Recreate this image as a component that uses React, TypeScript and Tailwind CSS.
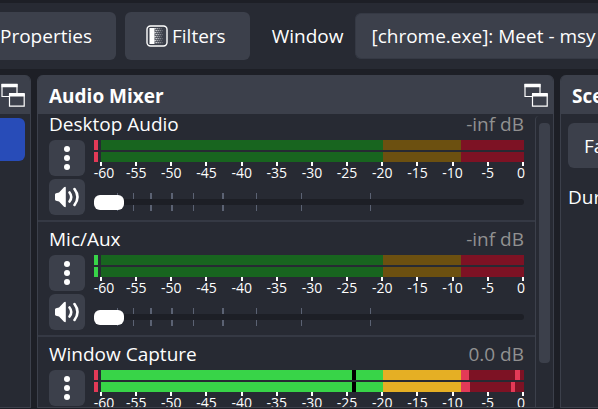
type Span = { from: number; to: number; tone: string };
type Channel = { name: string; level: string; clip: string; live: boolean; rows: Span[][] };

const scale = [-60, -55, -50, -45, -40, -35, -30, -25, -20, -15, -10, -5, 0];
const faderMarks = [23, 39, 56, 77, 99, 128, 162, 207, 276];
const wideMarks = [56, 77, 128];

const channels: Channel[] = [
  { name: "Desktop Audio", level: "-inf dB", clip: "bg-[#e33a57]", live: false, rows: [[], []] },
  { name: "Mic/Aux", level: "-inf dB", clip: "bg-[#38d448]", live: false, rows: [[], []] },
  {
    name: "Window Capture",
    level: "0.0 dB",
    clip: "bg-[#e33a57]",
    live: true,
    rows: [
      [
        { from: 251, to: 255, tone: "bg-black" },
        { from: 360, to: 368, tone: "bg-[#e33a57]" },
        { from: 414, to: 419, tone: "bg-[#e33a57]" },
      ],
      [
        { from: 251, to: 255, tone: "bg-black" },
        { from: 360, to: 369, tone: "bg-[#e33a57]" },
        { from: 410, to: 414, tone: "bg-[#e33a57]" },
      ],
    ],
  },
];

function PopOutIcon() {
  return (
    <svg width="24" height="24" viewBox="0 0 24 24" fill="none" stroke="#fff" aria-hidden="true">
      <path d="M8 13.5H1V1.5H16V10" strokeWidth="1.2" />
      <path d="M.5 2.5H16.5" strokeWidth="3.4" />
      <path d="M8.5 11V23.2H23.2V11" strokeWidth="1.2" />
      <path d="M8 11.8H23.8" strokeWidth="3.6" />
    </svg>
  );
}

function FilterIcon() {
  const dots = [];
  for (let row = 0; row < 8; row++) {
    for (let col = 0; col < 4; col++) {
      dots.push(
        <rect
          key={`${row}-${col}`}
          x={8.5 + col * 2 + (row % 2)}
          y={3 + row * 2}
          width={1.3}
          height={1.3}
          opacity={0.9 - col * 0.22}
        />,
      );
    }
  }
  return (
    <svg width="22" height="22" viewBox="0 0 22 22" fill="#fff" aria-hidden="true">
      <rect x="1" y="1" width="20" height="20" rx="3.5" fill="none" stroke="#fff" strokeWidth="1.4" />
      <rect x="3.5" y="3" width="5" height="16" />
      {dots}
    </svg>
  );
}

function DotsIcon() {
  return (
    <svg width="6" height="24" viewBox="0 0 6 24" fill="#fff" aria-hidden="true">
      <circle cx="3" cy="3" r="3" />
      <circle cx="3" cy="12" r="3" />
      <circle cx="3" cy="21" r="3" />
    </svg>
  );
}

function SpeakerIcon() {
  return (
    <svg width="26" height="22" viewBox="0 0 26 22" fill="none" stroke="#fff" aria-hidden="true">
      <path d="M1 8.5Q1 7.5 2 7.3L5 6.5L10 1.2Q11.8 0 11.8 1.8V20.2Q11.8 22 10 20.8L5 15.5L2 14.7Q1 14.5 1 13.5Z" fill="#fff" stroke="none" />
      <path d="M15.5 6.5Q19 11 15.5 15.5" strokeWidth="2.6" strokeLinecap="round" />
      <path d="M20.5 3Q26.5 11 20.5 19" strokeWidth="2.6" strokeLinecap="round" />
    </svg>
  );
}

function MeterRow({ channel, row }: { channel: Channel; row: Span[] }) {
  const { live, clip } = channel;
  return (
    <div className="flex h-2.5 gap-[3px]">
      <div className={`w-1 ${clip}`} />
      <div className="relative flex flex-1">
        <div className={`grow-[282] ${live ? "bg-[#38d448]" : "bg-[#18651f]"}`} />
        <div className={`grow-[78] ${live ? "bg-[#e5af24]" : "bg-[#6c5010]"}`} />
        <div className="grow-[63] bg-[#7d1224]" />
        {row.map((s) => (
          <div
            key={s.from}
            className={`absolute inset-y-0 ${s.tone}`}
            style={{ left: `${(s.from / 423) * 100}%`, width: `${((s.to - s.from) / 423) * 100}%` }}
          />
        ))}
      </div>
    </div>
  );
}

function ChannelStrip({ channel }: { channel: Channel }) {
  return (
    <section className="border-b-2 border-[#353944] px-[11px] pt-[7px] pb-[5px]">
      <div className="mb-1.5 flex justify-between leading-5">
        <h3>{channel.name}</h3>
        <span className="text-[#919191]">{channel.level}</span>
      </div>
      <div className="flex gap-[9px]">
        <div className="flex flex-col gap-[3px]">
          <button aria-label={`${channel.name} options`} className="flex size-9 items-center justify-center rounded-md bg-[#3c404b]">
            <DotsIcon />
          </button>
          <button aria-label={`Mute ${channel.name}`} className="flex size-9 items-center justify-center rounded-md bg-[#3c404b]">
            <SpeakerIcon />
          </button>
        </div>
        <div className="min-w-0 flex-1">
          <div className="flex flex-col gap-0.5">
            {channel.rows.map((row, i) => (
              <MeterRow key={i} channel={channel} row={row} />
            ))}
          </div>
          <div className="flex justify-between pr-px pl-[7px] text-sm leading-[13px]">
            {scale.map((n) => (
              <div key={n} className="group flex w-0 flex-col items-center">
                <div className="h-1 w-0.5 bg-white" />
                <span className="group-first:pl-1.5 group-last:pr-1">{n}</span>
              </div>
            ))}
          </div>
          <div className="relative mt-3.5 h-[18px]">
            {faderMarks.map((m) => (
              <div
                key={m}
                className={`absolute inset-y-0 bg-[#5b6273] ${wideMarks.includes(m) ? "w-0.5" : "w-px"}`}
                style={{ left: `${(m / 430) * 100}%` }}
              />
            ))}
            <input
              type="range"
              min={0}
              max={100}
              defaultValue={0}
              aria-label={`${channel.name} volume`}
              className="relative block h-[18px] w-full appearance-none bg-transparent [&::-webkit-slider-runnable-track]:h-1.5 [&::-webkit-slider-runnable-track]:rounded-full [&::-webkit-slider-runnable-track]:bg-[#1d1f26] [&::-webkit-slider-thumb]:-mt-1 [&::-webkit-slider-thumb]:h-[15px] [&::-webkit-slider-thumb]:w-[30px] [&::-webkit-slider-thumb]:appearance-none [&::-webkit-slider-thumb]:rounded-md [&::-webkit-slider-thumb]:bg-white"
            />
          </div>
        </div>
      </div>
    </section>
  );
}

export default function App() {
  return (
    <div className="flex h-screen flex-col overflow-hidden bg-[#1d1f26] pt-[3px] font-['Open_Sans','Noto_Sans',sans-serif] text-[19px] leading-7 text-[#fefefe]">
      <header className="flex h-[66px] shrink-0 items-center bg-[#272a33] whitespace-nowrap">
        <button className="h-12 rounded-r-md bg-[#3c404b] pr-6">Properties</button>
        <button className="ml-[9px] flex h-12 items-center gap-1 rounded-md bg-[#3c404b] pr-6 pl-[21px]">
          <FilterIcon />
          Filters
        </button>
        <label htmlFor="window" className="ml-[22px]">
          Window
        </label>
        <select id="window" className="ml-3 h-[46px] min-w-0 flex-1 appearance-none rounded-l-md border border-r-0 border-[#353944] bg-[#3c404b] pl-[15px]">
          <option>[chrome.exe]: Meet - msy</option>
        </select>
      </header>

      <main className="mt-1.5 mb-px flex min-h-0 flex-1 gap-1.5">
        <aside className="flex w-[31px] shrink-0 flex-col overflow-hidden rounded-tr-md border-r border-b border-[#3c404b] bg-[#272a33]">
          <div className="flex h-[39px] items-center justify-end bg-[#3c404b] pr-[5px]">
            <button aria-label="Undock panel">
              <PopOutIcon />
            </button>
          </div>
          <button aria-label="Selected scene" className="mt-1 mr-[5px] h-[43px] rounded-r-md bg-[#284cb8]" />
        </aside>

        <section className="flex min-w-0 flex-1 flex-col overflow-hidden rounded-t-md border-x border-b border-[#3c404b] bg-[#272a33]">
          <div className="flex h-[39px] shrink-0 items-center justify-between bg-[#3c404b] pr-[5px] pl-[11px]">
            <h2 className="pt-0.5 font-bold">Audio Mixer</h2>
            <button aria-label="Undock Audio Mixer">
              <PopOutIcon />
            </button>
          </div>
          <div className="flex min-h-0 flex-1">
            <div className="min-w-0 flex-1 overflow-hidden">
              <div className="-mt-[7px]">
                {channels.map((c) => (
                  <ChannelStrip key={c.name} channel={c} />
                ))}
              </div>
            </div>
            <div className="mt-0.5 w-[18px] rounded-tl-sm border-l border-[#3c404b] pt-[7px] pl-[3px]">
              <div className="h-60 w-[11px] rounded-sm bg-[#3c404b]" />
            </div>
          </div>
        </section>

        <aside className="flex w-[38px] shrink-0 flex-col overflow-hidden rounded-tl-md border-b border-l border-[#3c404b] bg-[#272a33] whitespace-nowrap">
          <div className="flex h-[39px] items-center bg-[#3c404b] pl-[11px]">
            <h2 className="pt-0.5 font-bold">Scene Transitions</h2>
          </div>
          <div className="flex flex-col gap-[15px] pt-[9px] pl-[7px]">
            <select aria-label="Transition" className="h-[45px] w-full appearance-none rounded-l-md bg-[#3c404b] pl-4">
              <option>Fade</option>
            </select>
            <span>Duration</span>
          </div>
        </aside>
      </main>
    </div>
  );
}
